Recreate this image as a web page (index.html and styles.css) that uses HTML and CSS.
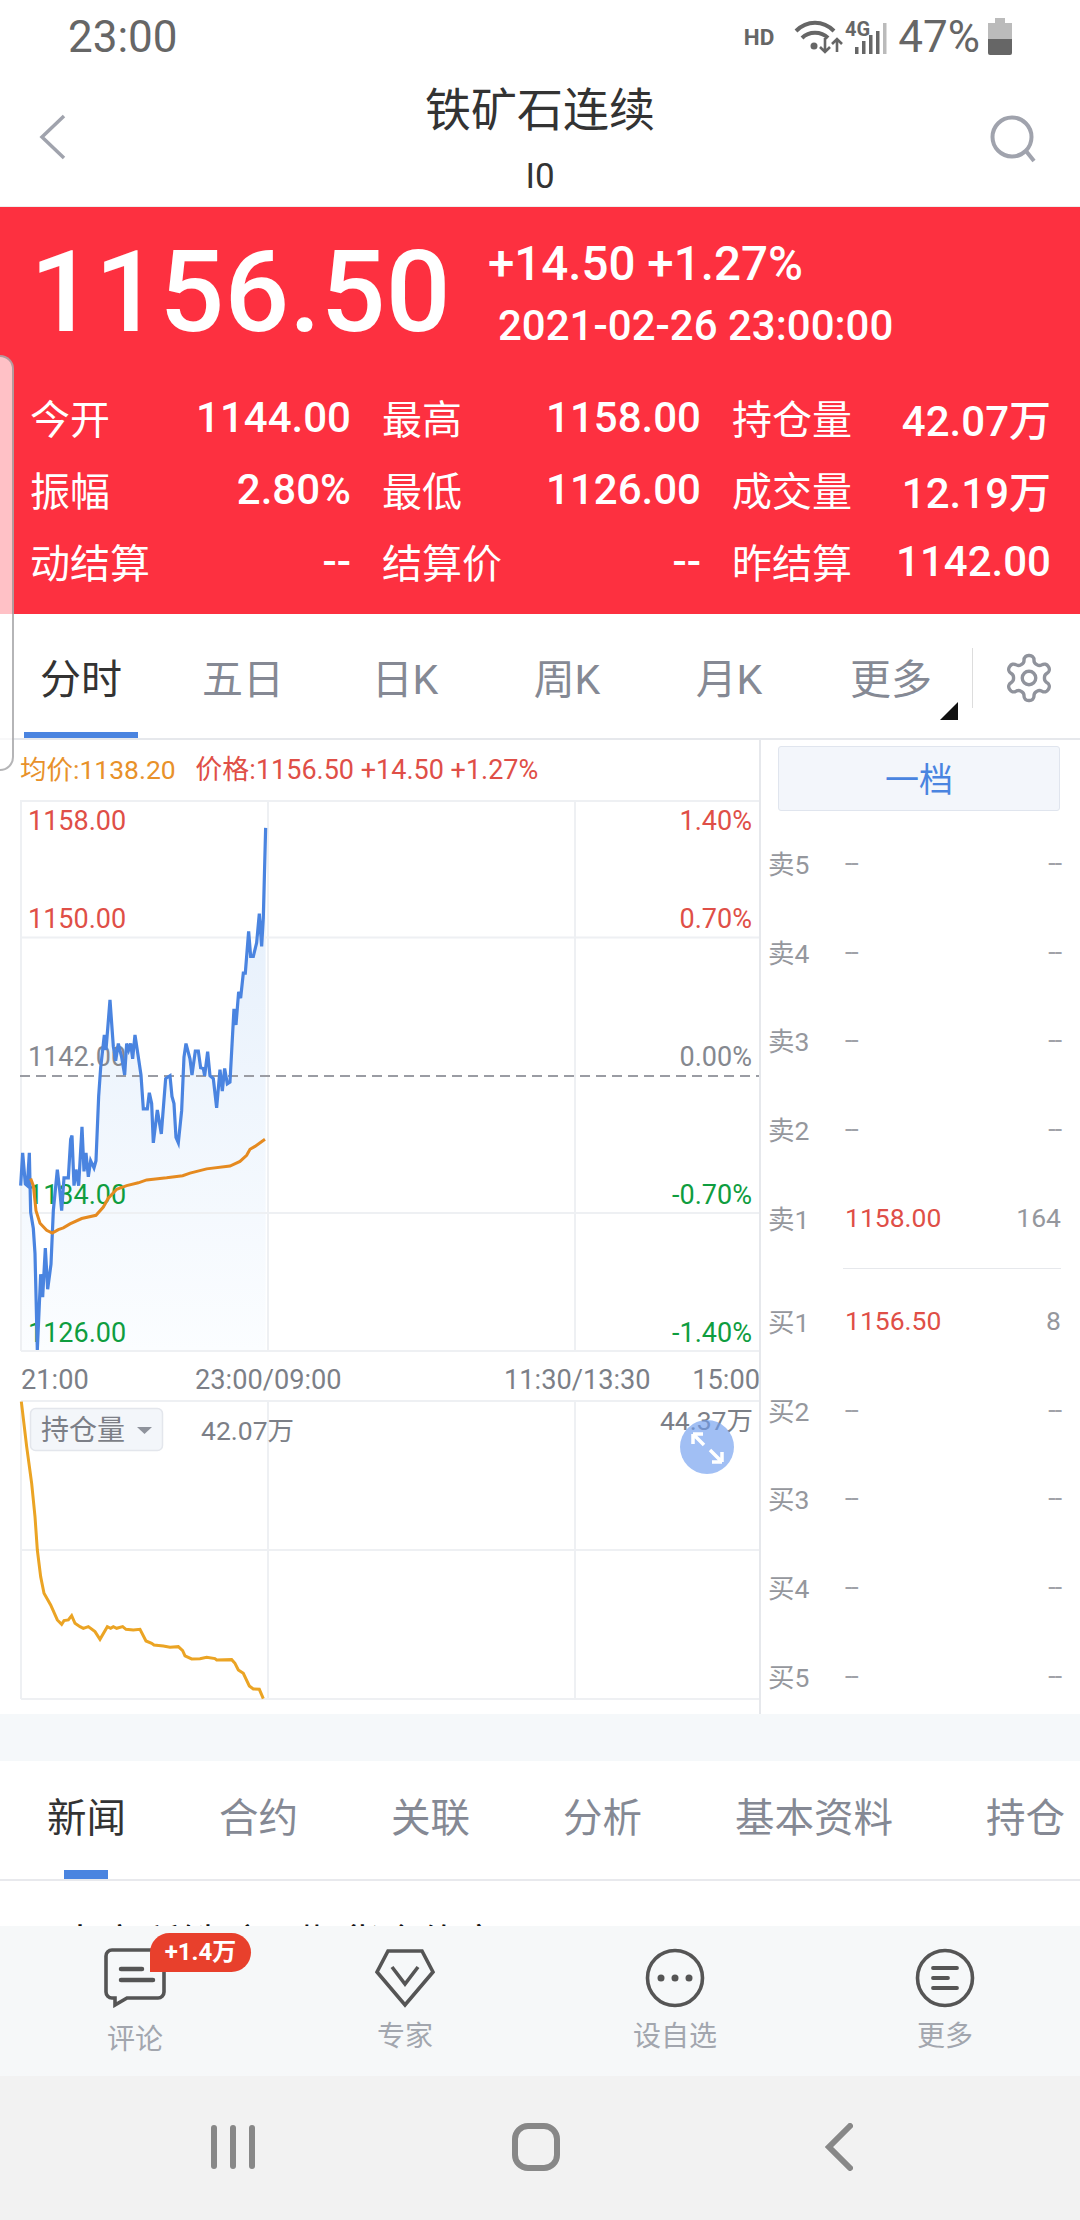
FILE: index.html
```html
<!DOCTYPE html>
<html lang="zh-CN">
<head>
  <meta charset="UTF-8" />
  <meta name="viewport" content="width=device-width, initial-scale=1.0" />
  <title>铁矿石连续</title>
  <link rel="stylesheet" href="styles.css">
</head>
<body>
  <div class="handle"></div>

  <div class="status">
    <span class="time">23:00</span>
    <span class="hd">HD</span>
    <svg class="net" width="94" height="40" viewBox="790 16 94 40">
      <g fill="none" stroke="#666" stroke-width="4">
        <path d="M793 30c11-11 27-11 38 0" />
        <path d="M799 37c7-7 19-7 26 0" />
      </g>
      <circle cx="811" cy="45" r="3.5" fill="#666" />
      <path d="M822 37v14M817 46l5 5 5-5M834 51V38M829 43l5-5 5 5" fill="none" stroke="#666" stroke-width="2.6" />
      <text class="net-label" x="842" y="35">4G</text>
      <g fill="#666">
        <rect x="852" y="46" width="3.5" height="7" />
        <rect x="859" y="40" width="3.5" height="13" />
        <rect x="866" y="34" width="3.5" height="19" />
        <rect x="873" y="30" width="3.5" height="23" />
      </g>
      <rect x="880" y="22" width="3.5" height="31" fill="#bbb" />
    </svg>
    <span class="battery-text">47%</span>
    <svg class="battery" width="24" height="37" viewBox="0 0 24 37">
      <path d="M7 0h10v5H7zM0 5h24v16H0z" fill="#bbb" />
      <path d="M0 21h24v14a2 2 0 0 1-2 2H2a2 2 0 0 1-2-2z" fill="#666" />
    </svg>
  </div>

  <div class="header">
    <svg class="back" width="28" height="46" viewBox="0 0 28 46">
      <path d="M25 2 3 23l22 21" fill="none" stroke="#a0a3ad" stroke-width="3.5" />
    </svg>
    <div class="title-box">
      <div class="title">铁矿石连续</div>
      <div class="code">I0</div>
    </div>
    <svg class="search" width="46" height="48" viewBox="0 0 46 48">
      <circle cx="22" cy="22" r="19.5" fill="none" stroke="#a0a3ad" stroke-width="4" />
      <path d="m36 36 8 10" fill="none" stroke="#a0a3ad" stroke-width="4" />
    </svg>
  </div>

  <div class="quote">
    <div class="quote-top">
      <div class="price">1156.50</div>
      <div class="quote-side">
        <div class="change">+14.50 +1.27%</div>
        <div class="stamp">2021-02-26 23:00:00</div>
      </div>
    </div>
    <div class="stats">
      <div class="stat"><span>今开</span><b>1144.00</b></div>
      <div class="stat"><span>最高</span><b>1158.00</b></div>
      <div class="stat"><span>持仓量</span><b>42.07万</b></div>
      <div class="stat"><span>振幅</span><b>2.80%</b></div>
      <div class="stat"><span>最低</span><b>1126.00</b></div>
      <div class="stat"><span>成交量</span><b>12.19万</b></div>
      <div class="stat"><span>动结算</span><b>--</b></div>
      <div class="stat"><span>结算价</span><b>--</b></div>
      <div class="stat"><span>昨结算</span><b>1142.00</b></div>
    </div>
  </div>

  <div class="tabs">
    <div class="tab active">分时</div>
    <div class="tab">五日</div>
    <div class="tab">日K</div>
    <div class="tab">周K</div>
    <div class="tab">月K</div>
    <div class="tab more">更多</div>
    <div class="gear-box">
      <svg width="54" height="54" viewBox="0 0 24 24" fill="none" stroke="#90939c" stroke-width="1.5">
        <path d="M12.22 2h-.44a2 2 0 0 0-2 2v.18a2 2 0 0 1-1 1.73l-.43.25a2 2 0 0 1-2 0l-.15-.08a2 2 0 0 0-2.73.73l-.22.38a2 2 0 0 0 .73 2.73l.15.1a2 2 0 0 1 1 1.72v.51a2 2 0 0 1-1 1.74l-.15.09a2 2 0 0 0-.73 2.73l.22.38a2 2 0 0 0 2.73.73l.15-.08a2 2 0 0 1 2 0l.43.25a2 2 0 0 1 1 1.73V20a2 2 0 0 0 2 2h.44a2 2 0 0 0 2-2v-.18a2 2 0 0 1 1-1.73l.43-.25a2 2 0 0 1 2 0l.15.08a2 2 0 0 0 2.73-.73l.22-.39a2 2 0 0 0-.73-2.73l-.15-.08a2 2 0 0 1-1-1.74v-.5a2 2 0 0 1 1-1.74l.15-.09a2 2 0 0 0 .73-2.73l-.22-.38a2 2 0 0 0-2.73-.73l-.15.08a2 2 0 0 1-2 0l-.43-.25a2 2 0 0 1-1-1.73V4a2 2 0 0 0-2-2z" />
        <circle cx="12" cy="12" r="3" />
      </svg>
    </div>
  </div>

  <div class="market">
    <div class="chart-col">
      <div class="info">
        <span class="avg">均价:1138.20</span>
        <span class="now">价格:1156.50 +14.50 +1.27%</span>
      </div>
      <svg class="chart" width="759" height="914" viewBox="0 800 759 914">
        <defs>
          <linearGradient id="area" x1="0" y1="0" x2="0" y2="1">
            <stop offset="0" stop-color="#e3eefb" />
            <stop offset="1" stop-color="#fbfdff" />
          </linearGradient>
        </defs>

        <!-- main plot -->
        <g transform="translate(0 800) scale(.3333 .3571)">
          <polygon fill="url(#area)" points="62,1543 62,1080 68,988 76,1075 82,1080 88,988 92,1155 100,1200 105,1270 112,1540 122,1328 128,1392 136,1255 143,1370 153,1300 160,1150 172,1035 180,1100 185,1150 192,1058 205,1058 212,950 216,940 222,1080 228,1035 236,1080 246,915 252,1040 258,988 265,1055 272,1010 282,1030 288,1010 296,830 302,750 313,658 318,700 330,560 340,690 347,730 355,682 365,720 374,770 380,682 386,700 392,682 398,725 405,658 415,720 423,770 430,865 442,865 448,820 455,850 460,960 472,868 484,935 497,780 510,772 516,830 522,850 528,945 535,960 545,870 552,720 558,682 570,725 576,770 586,703 595,703 602,750 610,752 614,772 623,705 630,772 640,780 650,862 660,755 667,815 674,752 682,795 690,790 702,585 708,630 716,537 722,555 730,485 736,485 746,368 752,438 760,438 770,400 778,318 785,410 790,330 797,78 797,1543" />
        </g>
        <g class="grid">
          <path d="M21 801H759M21 937.5H759M21 1213H759M21 1351H759M21 1401H759M21 1550H759M21 1699H759" />
          <path d="M21 800V1351M268 800V1351M575 800V1351M21 1401V1699M268 1401V1699M575 1401V1699" />
        </g>
        <path class="base" d="M20 1076H759" />

        <text class="axis up" x="28" y="830">1158.00</text>
        <text class="axis up" x="28" y="928">1150.00</text>
        <text class="axis flat" x="28" y="1066">1142.00</text>
        <text class="axis down" x="28" y="1204">1134.00</text>
        <text class="axis down" x="28" y="1342">1126.00</text>
        <text class="axis up end" x="752" y="830">1.40%</text>
        <text class="axis up end" x="752" y="928">0.70%</text>
        <text class="axis flat end" x="752" y="1066">0.00%</text>
        <text class="axis down end" x="752" y="1204">-0.70%</text>
        <text class="axis down end" x="752" y="1342">-1.40%</text>

        <g transform="translate(0 800) scale(.3333 .3571)">
          <polyline class="line-price" points="62,1080 68,988 76,1075 82,1080 88,988 92,1155 100,1200 105,1270 112,1540 122,1328 128,1392 136,1255 143,1370 153,1300 160,1150 172,1035 180,1100 185,1150 192,1058 205,1058 212,950 216,940 222,1080 228,1035 236,1080 246,915 252,1040 258,988 265,1055 272,1010 282,1030 288,1010 296,830 302,750 313,658 318,700 330,560 340,690 347,730 355,682 365,720 374,770 380,682 386,700 392,682 398,725 405,658 415,720 423,770 430,865 442,865 448,820 455,850 460,960 472,868 484,935 497,780 510,772 516,830 522,850 528,945 535,960 545,870 552,720 558,682 570,725 576,770 586,703 595,703 602,750 610,752 614,772 623,705 630,772 640,780 650,862 660,755 667,815 674,752 682,795 690,790 702,585 708,630 716,537 722,555 730,485 736,485 746,368 752,438 760,438 770,400 778,318 785,410 790,330 797,78" />
          <polyline class="line-avg" points="92,1060 100,1080 108,1150 120,1185 140,1205 157,1213 175,1203 190,1198 210,1187 245,1172 288,1163 310,1140 325,1115 350,1090 380,1080 415,1072 440,1064 500,1058 548,1052 570,1045 620,1033 690,1025 720,1012 740,995 750,978 765,970 795,950" />
        </g>

        <!-- time axis -->
        <text class="axis time-tick" x="21" y="1389">21:00</text>
        <text class="axis time-tick" x="195" y="1389">23:00/09:00</text>
        <text class="axis time-tick" x="504" y="1389">11:30/13:30</text>
        <text class="axis time-tick end" x="760" y="1389">15:00</text>

        <!-- open interest -->
        <g transform="translate(0 1360) scale(.3333)">
          <polyline class="line-oi" points="64,125 80,260 95,370 105,470 112,570 122,650 132,700 152,735 172,780 185,793 192,782 205,780 215,767 225,790 240,800 250,805 265,800 285,815 300,838 322,800 332,805 340,800 350,805 368,800 378,808 400,810 420,808 438,843 455,850 462,855 490,858 510,862 535,860 548,872 555,888 575,897 600,896 620,892 645,896 650,900 695,899 705,910 715,930 730,940 748,978 760,987 778,988 790,1016" />
        </g>
        <rect class="pill" x="30.5" y="1408.5" width="132" height="42" rx="5" />
        <text class="pill-text" x="41" y="1440">持仓量</text>
        <path d="M137 1427h15l-7.500 7z" fill="#8f939c" />
        <text class="axis oi" x="201" y="1440">42.07万</text>
        <text class="axis oi end" x="753" y="1430">44.37万</text>
        <circle cx="707" cy="1447" r="27" fill="#6f9dee" fill-opacity=".65" />
        <path d="M693 1434l11 11M693 1434h10M693 1434v10M722 1462l-12-12M722 1462h-10M722 1462v-10" fill="none" stroke="#fff" stroke-width="3.500" />
      </svg>
    </div>

    <div class="book">
      <div class="depth-btn">一档</div>
      <div class="row"><span class="side">卖5</span><span class="px none">--</span><span class="qty none">--</span></div>
      <div class="row"><span class="side">卖4</span><span class="px none">--</span><span class="qty none">--</span></div>
      <div class="row"><span class="side">卖3</span><span class="px none">--</span><span class="qty none">--</span></div>
      <div class="row"><span class="side">卖2</span><span class="px none">--</span><span class="qty none">--</span></div>
      <div class="row"><span class="side">卖1</span><span class="px">1158.00</span><span class="qty">164</span></div>
      <div class="book-sep"></div>
      <div class="row"><span class="side">买1</span><span class="px">1156.50</span><span class="qty">8</span></div>
      <div class="row"><span class="side">买2</span><span class="px none">--</span><span class="qty none">--</span></div>
      <div class="row"><span class="side">买3</span><span class="px none">--</span><span class="qty none">--</span></div>
      <div class="row"><span class="side">买4</span><span class="px none">--</span><span class="qty none">--</span></div>
      <div class="row"><span class="side">买5</span><span class="px none">--</span><span class="qty none">--</span></div>
    </div>
  </div>

  <div class="band"></div>

  <div class="news-tabs">
    <div class="news-tab active">新闻</div>
    <div class="news-tab">合约</div>
    <div class="news-tab">关联</div>
    <div class="news-tab">分析</div>
    <div class="news-tab">基本资料</div>
    <div class="news-tab">持仓</div>
  </div>

  <div class="news-body">
    <div class="headline">大商所铁矿石期货合约交易</div>
  </div>

  <div class="toolbar">
    <div class="tool tool-comment">
      <svg width="64" height="60" viewBox="0 0 64 60" fill="none" stroke="#555" stroke-width="3.600">
        <path d="M9 2h46a6 6 0 0 1 6 6v36a6 6 0 0 1-6 6H24L12 57v-7H9a6 6 0 0 1-6-6V8a6 6 0 0 1 6-6z" />
        <path d="M18 21h21M18 32h32" stroke-width="4.500" stroke-linecap="round" />
      </svg>
      <span class="badge">+1.4万</span>
      <span class="tool-label">评论</span>
    </div>
    <div class="tool">
      <svg width="60" height="60" viewBox="0 0 60 60" fill="none" stroke="#555" stroke-width="3.600">
        <path d="M13 3h34l11 21-28 33L2 24z" />
        <path d="M17 19l13 17 13-17" />
      </svg>
      <span class="tool-label">专家</span>
    </div>
    <div class="tool">
      <svg width="60" height="60" viewBox="0 0 60 60">
        <circle cx="30" cy="30" r="27.500" fill="none" stroke="#555" stroke-width="3.600" />
        <circle cx="16" cy="30" r="3.500" fill="#555" />
        <circle cx="30" cy="30" r="3.500" fill="#555" />
        <circle cx="44" cy="30" r="3.500" fill="#555" />
      </svg>
      <span class="tool-label">设自选</span>
    </div>
    <div class="tool">
      <svg width="60" height="60" viewBox="0 0 60 60" fill="none" stroke="#555">
        <circle cx="30" cy="30" r="27.500" stroke-width="3.600" />
        <path d="M18 20h24M18 30h15M18 40h24" stroke-width="3.800" stroke-linecap="round" />
      </svg>
      <span class="tool-label">更多</span>
    </div>
  </div>

  <div class="nav">
    <div class="nav-item">
      <svg width="44" height="46" viewBox="0 0 44 46" fill="#888">
        <rect x="0" y="1" width="6" height="44" rx="3" />
        <rect x="19" y="1" width="6" height="44" rx="3" />
        <rect x="38" y="1" width="6" height="44" rx="3" />
      </svg>
    </div>
    <div class="nav-item">
      <svg width="48" height="48" viewBox="0 0 48 48">
        <rect x="3" y="3" width="42" height="42" rx="13" fill="none" stroke="#888" stroke-width="6" />
      </svg>
    </div>
    <div class="nav-item">
      <svg width="28" height="48" viewBox="0 0 28 48">
        <path d="M25 3 4 24l21 21" fill="none" stroke="#888" stroke-width="6" stroke-linecap="round" />
      </svg>
    </div>
  </div>
</body>
</html>
```

FILE: styles.css
```css
body { margin: 0; width: 1080px; height: 2220px; overflow: hidden; position: relative; background: #fff; font-family: Roboto, "Noto Sans CJK SC", sans-serif; color: #333; }

.handle { position: absolute; left: 0; top: 355px; width: 12px; height: 412px; background: rgba(255, 255, 255, 0.7); border: 2px solid rgba(120, 120, 125, 0.55); border-left: none; border-radius: 0 14px 14px 0; z-index: 5; }

.status { height: 70px; display: flex; align-items: center; padding: 3px 68px 0; box-sizing: border-box; color: #666; }
.time { font-size: 44px; margin-right: auto; }
.hd { font-size: 22.5px; font-weight: 700; margin-right: 19px; }
.net { margin-right: 11px; }
.net-label { font-size: 20px; font-weight: 700; fill: #666; }
.battery-text { font-size: 44px; margin-right: 8px; }

.header { height: 137px; display: grid; grid-template-columns: 1fr auto 1fr; align-items: start; padding: 0 44px; border-bottom: 1px solid #eee; box-sizing: border-box; }
.back { margin: 44px 0 0 -5px; }
.search { margin-top: 45px; justify-self: end; }
.title-box { text-align: center; margin-top: 10px; }
.title { font-size: 46px; line-height: 60px; color: #333; }
.code { font-size: 35px; line-height: 44px; margin-top: 15px; color: #333; }

.quote { height: 407px; background: #fd3040; color: #fff; box-sizing: border-box; }
.quote-top { height: 174px; display: flex; }
.price { font-size: 114px; font-weight: 500; line-height: 134px; margin: 18px 0 0 30px; width: 458px; }
.change { font-size: 47.5px; font-weight: 500; line-height: 56px; margin-top: 29px; white-space: nowrap; }
.stamp { font-size: 42px; font-weight: 500; line-height: 56px; margin: 6px 0 0 10px; }
.stats { display: grid; grid-template-columns: 321px 319px 319px; grid-auto-rows: 72px; column-gap: 31px; padding: 0 30px; }
.stat { display: flex; justify-content: space-between; align-items: center; }
.stat span { font-size: 40px; }
.stat b { font-size: 42px; font-weight: 500; }

.tabs { height: 126px; display: flex; border-bottom: 2px solid #e6e8ec; box-sizing: border-box; }
.tab { width: 162px; height: 124px; line-height: 132px; text-align: center; font-size: 41px; color: #858994; position: relative; }
.tab.active { color: #333; }
.tab.active::after { content: ""; position: absolute; left: 24px; bottom: 0; width: 114px; height: 6px; background: #4a84e0; }
.tab.more::after { content: ""; position: absolute; right: 14px; bottom: 18px; border-style: solid; border-width: 0 0 18px 18px; border-color: transparent transparent #111 transparent; }
.gear-box { flex: 1; height: 60px; margin-top: 34px; border-left: 1px solid #ddd; display: flex; align-items: center; padding-left: 29px; }

.market { height: 974px; display: flex; }
.chart-col { width: 759px; }
.info { height: 60px; line-height: 60px; font-size: 26.5px; padding-left: 20px; white-space: nowrap; }
.avg { color: #e8912a; margin-right: 13px; }
.now { color: #df4f47; font-size: 27px; }
.chart { display: block; }
.grid path { fill: none; stroke: #eef0f3; stroke-width: 2; }
.base { fill: none; stroke: #9a9ca3; stroke-width: 2; stroke-dasharray: 10 6; }
.axis { font-size: 27px; }
.axis.end { text-anchor: end; }
.axis.up { fill: #df4f47; }
.axis.down { fill: #0f9d3f; }
.axis.flat { fill: #85888f; }
.axis.oi { fill: #7c7f87; font-size: 26.5px; }
.axis.time-tick { fill: #7c7f87; font-size: 27.2px; }
.line-price, .line-avg, .line-oi { fill: none; vector-effect: non-scaling-stroke; stroke-width: 3; }
.line-price { stroke: #4a84e0; stroke-width: 3.2; }
.line-avg { stroke: #e58a20; }
.line-oi { stroke: #eba424; }
.pill { fill: #f3f6fa; stroke: #e3e6ec; stroke-width: 1.500; }
.pill-text { font-size: 28px; fill: #7c7f87; }

.book { width: 321px; border-left: 2px solid #e6e8ec; box-sizing: border-box; overflow: hidden; }
.depth-btn { width: 282px; height: 65px; margin: 6px 0 7px 17px; line-height: 67px; text-align: center; font-size: 34px; color: #4a84e0; background: #f3f6fb; border: 1px solid #e0e5ee; border-radius: 3px; box-sizing: border-box; }
.row { height: 88.8px; display: flex; align-items: center; padding: 0 19px 0 7px; font-size: 26.500px; }
.side { width: 77px; color: #95979d; }
.px { flex: 1; color: #df4f47; }
.qty { color: #95979d; }
.px.none, .qty.none { color: #a0a2a8; letter-spacing: -1px; }
.book-sep { height: 1px; margin: 6px 19px 7px 82px; background: #e6e8ec; }

.band { height: 47px; background: #f5f8fa; }

.news-tabs { height: 120px; display: flex; gap: 93px; padding-left: 47px; border-bottom: 2px solid #e8e9ed; box-sizing: border-box; white-space: nowrap; }
.news-tab { font-size: 39.500px; line-height: 116px; height: 118px; color: #858994; position: relative; }
.news-tab.active { color: #333; }
.news-tab.active::after { content: ""; position: absolute; left: 17px; bottom: 0; width: 44px; height: 9px; background: #4a84e0; }

.news-body { height: 45px; overflow: hidden; }
.headline { font-size: 40px; line-height: 56px; padding: 36px 0 0 60px; color: #111; white-space: nowrap; }

.toolbar { height: 150px; background: #f6f8f9; display: grid; grid-template-columns: repeat(4, 270px); }
.tool { display: flex; flex-direction: column; align-items: center; padding-top: 22px; position: relative; }
.tool svg { display: block; }
.tool-label { font-size: 28px; line-height: 40px; margin-top: 9px; color: #a2a6ae; }
.tool-comment .tool-label { margin-top: 12px; }
.badge { position: absolute; left: 150px; top: 7px; width: 101px; height: 39px; line-height: 39px; text-align: center; font-size: 24px; font-weight: 700; color: #fff; background: #e8402c; border-radius: 20px 20px 20px 0; }

.nav { height: 144px; box-sizing: border-box; padding: 0 0 2px 81px; background: #f2f2f2; display: grid; grid-template-columns: repeat(3, 303px); }
.nav-item { display: flex; align-items: center; justify-content: center; }
```
